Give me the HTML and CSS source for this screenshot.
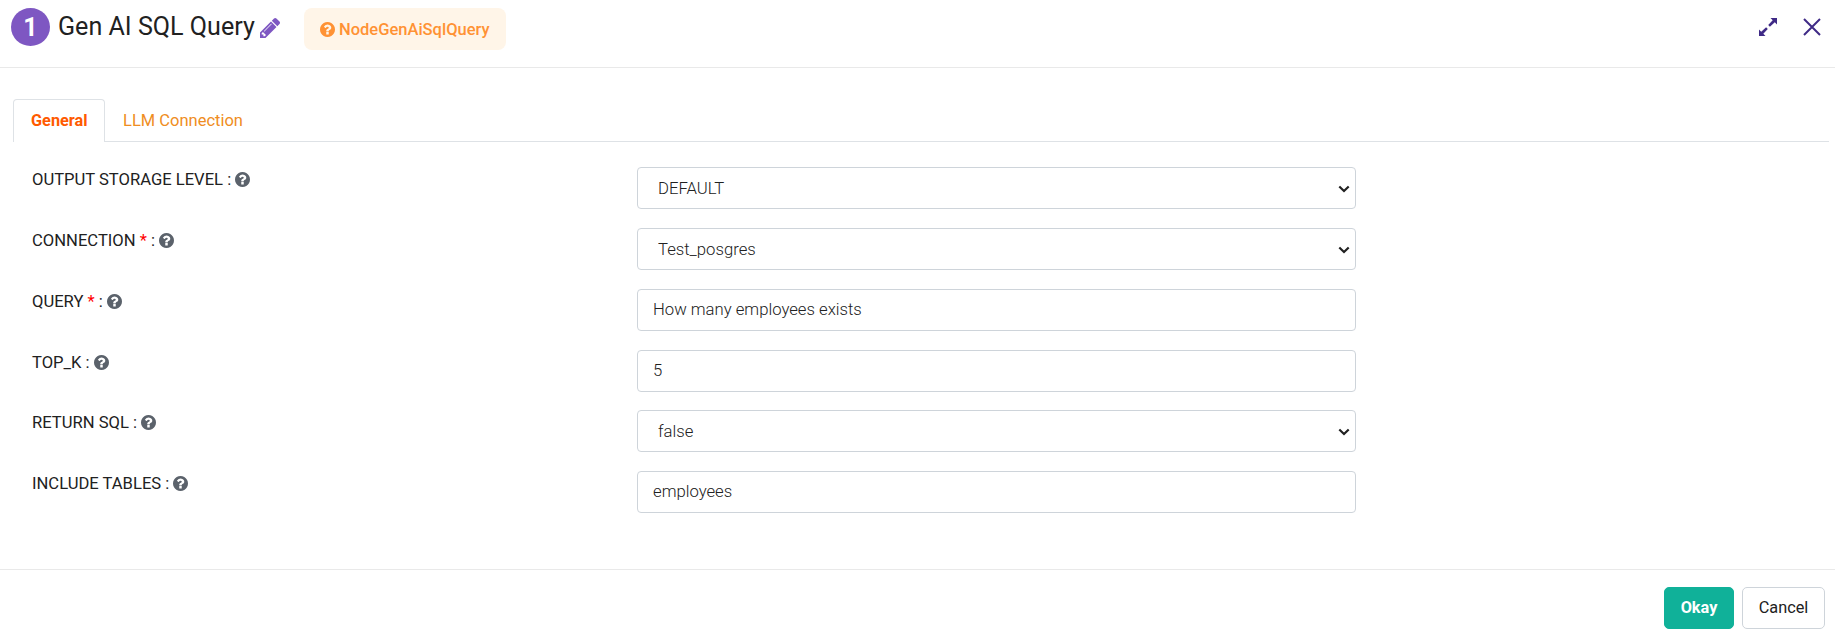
FILE: index.html
```html
<!DOCTYPE html>
<html lang="en">
<head>
<meta charset="utf-8">
<title>Gen AI SQL Query</title>
<link rel="stylesheet" href="styles.css">
</head>
<body>
<svg class="sprite" aria-hidden="true">
  <symbol id="help" viewBox="128 128 1536 1536"><path d="M1024 1376v-192q0-14-9-23t-23-9h-192q-14 0-23 9t-9 23v192q0 14 9 23t23 9h192q14 0 23-9t9-23zm256-672q0-88-55.500-163t-138.500-116-170-41q-243 0-371 213-15 24 8 42l132 100q7 6 19 6 16 0 25-12 53-68 86-92 34-24 86-24 48 0 85.500 26t37.500 59q0 38-20 61t-68 45q-63 28-115.500 86.500t-52.500 125.500v36q0 14 9 23t23 9h192q14 0 23-9t9-23q0-19 21.500-49.500t54.500-49.500q32-18 49-28.500t46-35 44.500-48 28-60.500 12.500-81zm384 192q0 209-103 385.500t-279.500 279.500-385.500 103-385.500-103-279.500-279.500-103-385.500 103-385.500 279.500-279.500 385.500-103 385.500 103 279.500 279.500 103 385.500z"/></symbol>
  <symbol id="chevron" viewBox="0 0 12 8"><path d="M1.300 1.500L6 6l4.700-4.500" fill="none" stroke="#212121" stroke-width="2.200"/></symbol>
</svg>
<div class="dialog">
  <header class="header">
    <span class="step">1</span>
    <h1 class="title">Gen AI SQL Query</h1>
    <svg class="pencil" viewBox="128 149 1515 1515"><path d="M491 1536l91-91-235-235-91 91v107h128v128h107zm523-928q0-22-22-22-10 0-17 7l-542 542q-7 7-7 17 0 22 22 22 10 0 17-7l542-542q7-7 7-17zm-54-192l416 416-832 832h-416v-416zm683 96q0 53-37 90l-166 166-416-416 166-165q36-38 90-38 53 0 91 38l235 234q37 39 37 91z"/></svg>
    <span class="badge"><svg class="help"><use href="#help"/></svg><span class="badge-text">NodeGenAiSqlQuery</span></span>
    <div class="window-actions">
      <svg class="expand" viewBox="0 0 18 18"><path d="M11.500 0H18v6.500l-2.200-2.200-4.900 4.500-1.700-1.700 4.500-4.900zM6.500 18H0v-6.500l2.200 2.200 4.900-4.500 1.700 1.700-4.500 4.900z"/></svg>
      <svg class="close" viewBox="0 0 18 18"><path d="M1 1l16 16M17 1L1 17"/></svg>
    </div>
  </header>
  <main class="body">
    <nav class="tabs">
      <a class="tab active">General</a>
      <a class="tab">LLM Connection</a>
    </nav>
    <form class="form">
      <div class="row"><label class="label"><span>OUTPUT STORAGE LEVEL :</span><svg class="help"><use href="#help"/></svg></label><div class="field"><select class="control select"><option>DEFAULT</option></select><svg class="chevron"><use href="#chevron"/></svg></div></div>
      <div class="row"><label class="label"><span>CONNECTION <b class="required">*</b> :</span><svg class="help"><use href="#help"/></svg></label><div class="field"><select class="control select"><option>Test_posgres</option></select><svg class="chevron"><use href="#chevron"/></svg></div></div>
      <div class="row"><label class="label"><span>QUERY <b class="required">*</b> :</span><svg class="help"><use href="#help"/></svg></label><div class="field"><input class="control" type="text" value="How many employees exists"></div></div>
      <div class="row"><label class="label"><span>TOP_K :</span><svg class="help"><use href="#help"/></svg></label><div class="field"><input class="control" type="text" value="5"></div></div>
      <div class="row"><label class="label"><span>RETURN SQL :</span><svg class="help"><use href="#help"/></svg></label><div class="field"><select class="control select"><option>false</option></select><svg class="chevron"><use href="#chevron"/></svg></div></div>
      <div class="row"><label class="label"><span>INCLUDE TABLES :</span><svg class="help"><use href="#help"/></svg></label><div class="field"><input class="control" type="text" value="employees"></div></div>
    </form>
  </main>
  <footer class="footer">
    <button class="button primary">Okay</button>
    <button class="button">Cancel</button>
  </footer>
</div>
</body>
</html>
```
FILE: styles.css
```css
* { box-sizing: border-box; }
body { margin: 0; background: #fff; color: #212121; font-family: Roboto, sans-serif; font-size: 16.5px; }
.sprite { display: none; }
.dialog { height: 635px; display: flex; flex-direction: column; overflow: hidden; }
.header { height: 68px; flex: none; display: flex; align-items: flex-start; padding: 8px 14px 0 11px; border-bottom: 1px solid #e9e9e9; }
.step { width: 39px; height: 38px; border-radius: 50%; background: #7e57c2; color: #fff; font-size: 25px; font-weight: 700; line-height: 39px; text-align: center; }
.title { margin: 4px 0 0 8px; font-size: 25.1px; font-weight: 400; line-height: 30px; white-space: nowrap; width: 202px; }
.pencil { width: 20px; height: 20px; margin-top: 10px; fill: #7e57c2; }
.help { width: 15px; height: 15px; fill: #5b626b; flex: none; }
.badge { display: flex; align-items: center; margin-left: 24px; width: 202px; height: 42px; padding-left: 16px; border-radius: 8px; background: #fff5e8; color: #ff9234; font-size: 16.5px; font-weight: 500; white-space: nowrap; }
.badge .help { fill: #ff9234; margin-right: 4px; }
.window-actions { display: flex; gap: 26px; margin: 10px 0 0 auto; }
.expand { width: 18px; height: 18px; fill: #3f2a86; }
.close { width: 18px; height: 18px; fill: none; stroke: #3f2a86; stroke-width: 2; }
.body { flex: 1; padding: 31px 6px 0 13px; }
.tabs { display: flex; height: 43px; border-bottom: 1px solid #dee2e6; }
.tab { height: 43px; padding: 0 17px; line-height: 42px; border: 1px solid transparent; border-bottom: 0; color: #ef8d22; white-space: nowrap; }
.tab.active { width: 92px; background: #fff; border-color: #dee2e6; border-radius: 4px 4px 0 0; color: #ff5a00; font-size: 16.3px; font-weight: 700; }
.form { display: grid; grid-template-rows: 61px 61px 61px 60px 61px 61px; padding-top: 25px; }
.row { display: grid; grid-template-columns: 605px 719px; padding-left: 19px; }
.label { display: flex; height: 25px; align-items: center; gap: 4px; font-size: 16.6px; white-space: nowrap; }
.required { color: #f00; font-weight: 400; }
.field { position: relative; height: 42px; }
.control { display: block; width: 719px; height: 42px; padding: 0 15px 1px; border: 1px solid #ced4da; border-radius: 4px; background: #fff; color: #212121; font: 300 16.7px Roboto, sans-serif; outline: 0; }
.select { appearance: none; padding: 0 20px; }
.chevron { position: absolute; right: 6px; top: 18px; width: 12px; height: 8px; pointer-events: none; }
.footer { height: 66px; flex: none; border-top: 1px solid #e9e9e9; padding: 17px 10px 0; display: flex; justify-content: flex-end; gap: 8px; }
.button { width: 83px; height: 42px; padding: 0 0 2px; border: 1px solid #ced4da; border-radius: 5px; background: #fff; color: #212121; font: 400 16.3px Roboto, sans-serif; }
.primary { width: 70px; background: #10b199; border-color: #10b199; color: #fff; font-weight: 700; }
```
